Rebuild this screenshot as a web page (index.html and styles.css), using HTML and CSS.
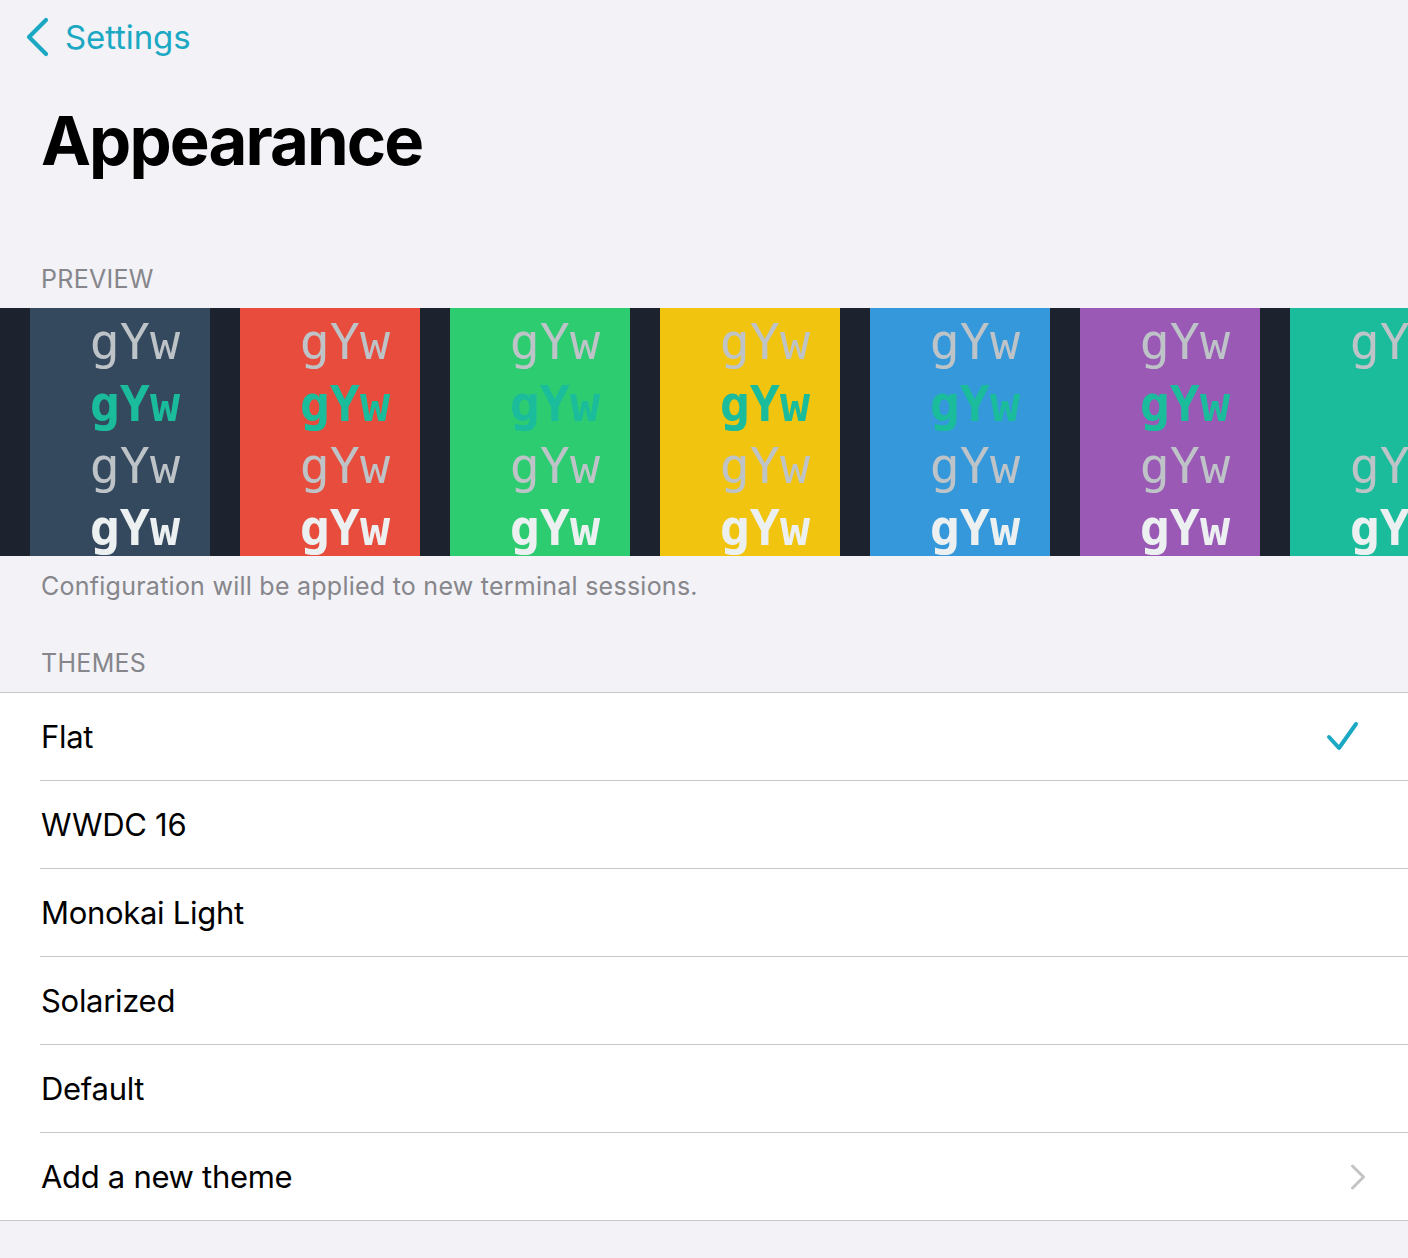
FILE: index.html
```html
<!DOCTYPE html>
<html lang="en">
<head>
<meta charset="utf-8">
<title>Appearance</title>
<link rel="stylesheet" href="styles.css">
</head>
<body>
  <nav class="navbar">
    <a class="back" href="#">
      <svg class="back-icon" width="26" height="40" viewBox="0 0 26 40">
        <path d="M21 3 L4 20 L21 37" fill="none" stroke="currentColor" stroke-width="4.2" stroke-linecap="round" stroke-linejoin="round"/>
      </svg>
      <span>Settings</span>
    </a>
  </nav>

  <h1 class="title">Appearance</h1>

  <section class="group">
    <h2 class="group-header">PREVIEW</h2>
    <div class="preview">
      <div class="swatch bg-asphalt"><span class="l-normal">gYw</span><span class="l-accent">gYw</span><span class="l-normal">gYw</span><span class="l-bright">gYw</span></div>
      <div class="swatch bg-red"><span class="l-normal">gYw</span><span class="l-accent">gYw</span><span class="l-normal">gYw</span><span class="l-bright">gYw</span></div>
      <div class="swatch bg-green"><span class="l-normal">gYw</span><span class="l-accent">gYw</span><span class="l-normal">gYw</span><span class="l-bright">gYw</span></div>
      <div class="swatch bg-yellow"><span class="l-normal">gYw</span><span class="l-accent">gYw</span><span class="l-normal">gYw</span><span class="l-bright">gYw</span></div>
      <div class="swatch bg-blue"><span class="l-normal">gYw</span><span class="l-accent">gYw</span><span class="l-normal">gYw</span><span class="l-bright">gYw</span></div>
      <div class="swatch bg-purple"><span class="l-normal">gYw</span><span class="l-accent">gYw</span><span class="l-normal">gYw</span><span class="l-bright">gYw</span></div>
      <div class="swatch bg-teal"><span class="l-normal">gYw</span><span class="l-accent">gYw</span><span class="l-normal">gYw</span><span class="l-bright">gYw</span></div>
    </div>
    <p class="group-footer">Configuration will be applied to new terminal sessions.</p>
  </section>

  <section class="group">
    <h2 class="group-header">THEMES</h2>
    <ul class="list">
      <li class="row">
        <span class="row-label">Flat</span>
        <svg class="check" width="34" height="32" viewBox="0 0 34 32">
          <path d="M3 16 L13 27 L30 3" fill="none" stroke="currentColor" stroke-width="4" stroke-linecap="round" stroke-linejoin="round"/>
        </svg>
      </li>
      <li class="row"><span class="row-label">WWDC 16</span></li>
      <li class="row"><span class="row-label">Monokai Light</span></li>
      <li class="row"><span class="row-label">Solarized</span></li>
      <li class="row"><span class="row-label">Default</span></li>
      <li class="row">
        <span class="row-label">Add a new theme</span>
        <svg class="chevron" width="16" height="26" viewBox="0 0 16 26">
          <path d="M2.5 2 L13.5 13 L2.5 24" fill="none" stroke="currentColor" stroke-width="3" stroke-linecap="round" stroke-linejoin="round"/>
        </svg>
      </li>
    </ul>
  </section>
</body>
</html>
```

FILE: styles.css
```css
* {
  box-sizing: border-box;
}

html,
body {
  margin: 0;
  padding: 0;
}

body {
  background: #f2f2f7;
  font-family: Inter, "Noto Sans", "Liberation Sans", sans-serif;
  color: #000;
  width: 1408px;
  height: 1258px;
  overflow: hidden;
}

/* Navigation bar */
.navbar {
  height: 76px;
  padding: 17px 0 0 25px;
}

.back {
  display: inline-flex;
  align-items: center;
  gap: 14px;
  color: #1ba8c3;
  text-decoration: none;
  font-size: 33px;
  letter-spacing: -0.1px;
}

.back-icon {
  display: block;
}

/* Large title */
.title {
  margin: 0;
  padding: 25px 0 0 41px;
  height: 182px;
  font-size: 67px;
  font-weight: 700;
  letter-spacing: -1.9px;
  line-height: 80px;
}

/* Grouped sections */
.group-header {
  margin: 0;
  padding: 0 0 0 41px;
  font-size: 25px;
  font-weight: 400;
  color: #86868b;
  line-height: 30px;
  height: 50px;
  padding-top: 6px;
  letter-spacing: 0.3px;
}

.group-footer {
  margin: 0;
  padding: 15px 0 0 41px;
  height: 86px;
  font-size: 25px;
  line-height: 30px;
  color: #86868b;
  letter-spacing: 0.25px;
}

/* Terminal colour preview strip */
.preview {
  display: flex;
  gap: 30px;
  padding-left: 30px;
  background: #1c232e;
  height: 248px;
  overflow: hidden;
}

.swatch {
  flex: 0 0 180px;
  display: flex;
  flex-direction: column;
  align-items: flex-end;
  padding: 3px 30px 0 0;
  font-family: "DejaVu Sans Mono", "Liberation Mono", monospace;
  font-size: 50px;
  line-height: 62px;
}

.swatch span {
  display: block;
  white-space: nowrap;
}

.l-normal {
  color: #bdc3c7;
}

.l-accent {
  color: #1abc9c;
  font-weight: 700;
}

.l-bright {
  color: #ecf0f1;
  font-weight: 700;
}

.bg-asphalt { background: #34495e; }
.bg-red { background: #e74c3c; }
.bg-green { background: #2ecc71; }
.bg-yellow { background: #f1c40f; }
.bg-blue { background: #3498db; }
.bg-purple { background: #9b59b6; }
.bg-teal { background: #1abc9c; }

/* Theme list */
.list {
  list-style: none;
  margin: 0;
  padding: 0 0 0 40px;
  background: #fff;
  border-top: 1px solid #c8c7cc;
  border-bottom: 1px solid #c8c7cc;
}

.row {
  display: flex;
  align-items: center;
  justify-content: space-between;
  height: 88px;
  padding-right: 42px;
  border-bottom: 1px solid #c8c7cc;
}

.row:last-child {
  border-bottom: none;
  height: 87px;
}

.row-label {
  font-size: 31px;
  letter-spacing: -0.3px;
  padding-left: 1px;
}

.check {
  color: #1ba8c3;
  margin-right: 6px;
}

.chevron {
  color: #c4c4c7;
  margin-right: 0;
}
```
